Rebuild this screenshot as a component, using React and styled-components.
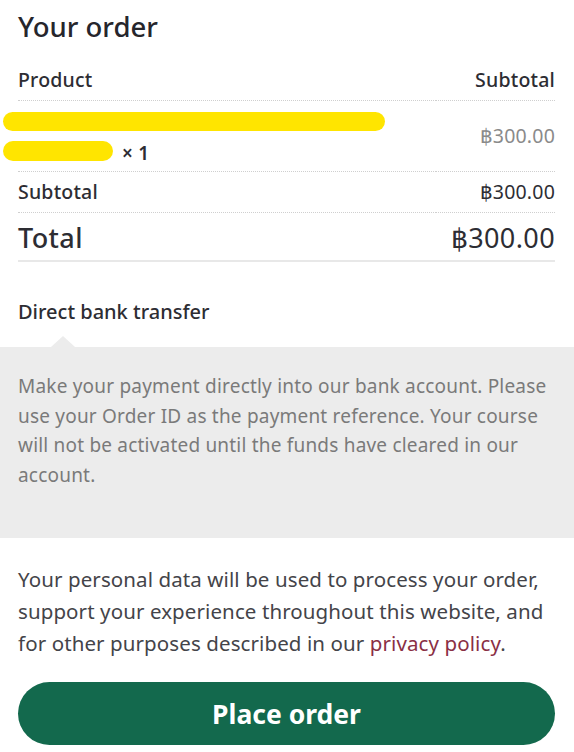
import * as React from "react";
import styled, { createGlobalStyle } from "styled-components";

const GlobalStyle = createGlobalStyle`
    html, body {
        margin: 0;
        padding: 0;
        background: #fff;
    }
    body {
        font-family: "Noto Sans", "Open Sans", sans-serif;
        color: #2d2d33;
    }
`;

const Wrapper = styled.section`
    width: 574px;
    overflow: hidden;
`;

const Inner = styled.div`
    padding: 0 19px 0 18px;
`;

const Title = styled.h3`
    margin: 0;
    padding-top: 10px;
    font-size: 27.5px;
    font-weight: 500;
    line-height: 34px;
    color: #26262c;
`;

const Table = styled.table`
    width: 100%;
    margin-top: 16px;
    border-collapse: collapse;
`;

const Row = styled.tr`
    border-bottom: ${({ $solid }) => ($solid ? "2px solid #e8e8e8" : "1px dotted #cfcfcf")};
`;

const Cell = styled.td`
    padding: ${({ $pad }) => $pad || "10px 0"};
    text-align: ${({ $right }) => ($right ? "right" : "left")};
    vertical-align: middle;
    font-size: ${({ $big }) => ($big ? "27px" : "19.5px")};
    font-weight: 400;
    line-height: ${({ $big }) => ($big ? "29px" : "20px")};
    letter-spacing: ${({ $big }) => ($big ? "0.4px" : "0.2px")};
    color: ${({ $muted }) => ($muted ? "#8a8a8a" : "#2d2d33")};
    white-space: nowrap;
`;

const HeadCell = styled(Cell).attrs({ as: "th" })`
    font-weight: 500;
`;

const NameLine = styled.div`
    display: flex;
    align-items: center;
    gap: 9px;
    height: 30px;
    margin-left: -15px;
`;

const Redacted = styled.span`
    display: inline-block;
    width: ${({ $w }) => $w}px;
    height: ${({ $h }) => $h || 19}px;
    border-radius: 10px;
    background: #ffe500;
`;

const Qty = styled.span`
    font-size: 19px;
    font-weight: 600;
    color: #2d2d33;
    margin-top: 4px;
`;

const Method = styled.div`
    margin-top: 38px;
    padding-bottom: 23px;
    font-size: 20px;
    font-weight: 500;
    line-height: 24px;
    color: #2d2d33;
`;

const PaymentBox = styled.div`
    position: relative;
    background: #ececec;
    padding: 25px 20px 48px 18px;
    font-size: 19px;
    line-height: 29.5px;
    letter-spacing: 0.2px;
    color: #7a7a7a;

    &::before {
        content: "";
        position: absolute;
        left: 51px;
        top: -11px;
        border-left: 12px solid transparent;
        border-right: 12px solid transparent;
        border-bottom: 11px solid #ececec;
    }
`;

const Privacy = styled.p`
    margin: 25px 0 0;
    font-size: 20.5px;
    line-height: 32px;
    letter-spacing: 0.1px;
    color: #444449;
`;

const Link = styled.a`
    color: #8a2f45;
    text-decoration: none;
`;

const PlaceButton = styled.button`
    display: block;
    width: 100%;
    height: 63px;
    margin: 23px 0 0;
    border: none;
    border-radius: 32px;
    background: #13694d;
    color: #fff;
    font-family: "Noto Sans", "Open Sans", sans-serif;
    font-size: 26.5px;
    font-weight: 700;
    cursor: pointer;
`;

const App = () => (
    <Wrapper>
        <GlobalStyle />
        <Inner>
            <Title>Your order</Title>
            <Table>
                <thead>
                    <Row>
                        <HeadCell>Product</HeadCell>
                        <HeadCell $right>Subtotal</HeadCell>
                    </Row>
                </thead>
                <tbody>
                    <Row>
                        <Cell $pad="5px 0">
                            <NameLine>
                                <Redacted $w={382} />
                            </NameLine>
                            <NameLine>
                                <Redacted $w={110} $h={20} />
                                <Qty>× 1</Qty>
                            </NameLine>
                        </Cell>
                        <Cell $right $muted>฿300.00</Cell>
                    </Row>
                </tbody>
                <tfoot>
                    <Row>
                        <HeadCell>Subtotal</HeadCell>
                        <Cell $right>฿300.00</Cell>
                    </Row>
                    <Row $solid>
                        <HeadCell $big $pad="10px 0 8px">Total</HeadCell>
                        <Cell $big $right $pad="10px 0 8px">฿300.00</Cell>
                    </Row>
                </tfoot>
            </Table>
            <Method>Direct bank transfer</Method>
        </Inner>
        <PaymentBox>
            Make your payment directly into our bank account. Please use your Order ID as the payment reference. Your course will not be activated until the funds have cleared in our account.
        </PaymentBox>
        <Inner>
            <Privacy>
                Your personal data will be used to process your order, support your experience throughout this website, and for other purposes described in our <Link href="#">privacy policy</Link>.
            </Privacy>
            <PlaceButton>Place order</PlaceButton>
        </Inner>
    </Wrapper>
);

export default App;
